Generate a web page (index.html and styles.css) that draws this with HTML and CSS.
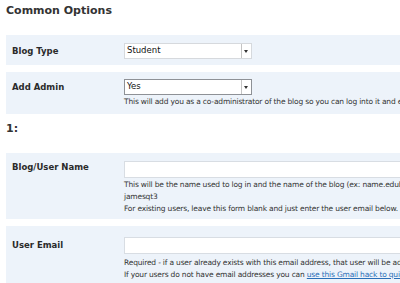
FILE: index.html
```html
<!DOCTYPE html>
<html lang="en">

<head>
    <meta charset="UTF-8">
    <meta name="viewport" content="width=device-width, initial-scale=1.0">
    <title>Common Options</title>
    <link rel="stylesheet" href="styles.css">
</head>

<body>
    <h2 class="section-title">Common Options</h2>

    <div class="row row-first">
        <div class="label">Blog Type</div>
        <div class="field">
            <div class="select">
                <span class="select-text">Student</span>
                <span class="select-arrow"></span>
            </div>
        </div>
    </div>

    <div class="row row-admin">
        <div class="label">Add Admin</div>
        <div class="field">
            <div class="select select-focus">
                <span class="select-text">Yes</span>
                <span class="select-arrow"></span>
            </div>
            <p class="help">This will add you as a co-administrator of the blog so you can log into it and edit it later.</p>
        </div>
    </div>

    <h2 class="section-title number">1:</h2>

    <div class="row row-user">
        <div class="label">Blog/User Name</div>
        <div class="field">
            <input type="text" class="text-input">
            <p class="help">This will be the name used to log in and the name of the blog (ex: name.edublogs.org)</p>
            <p class="help">jamesqt3</p>
            <p class="help">For existing users, leave this form blank and just enter the user email below.</p>
        </div>
    </div>

    <div class="row row-email">
        <div class="label">User Email</div>
        <div class="field">
            <input type="text" class="text-input">
            <p class="help">Required - if a user already exists with this email address, that user will be added to the blog.</p>
            <p class="help">If your users do not have email addresses you can <a href="#">use this Gmail hack to quickly create them</a></p>
        </div>
    </div>
</body>

</html>
```

FILE: styles.css
```css
body {
    margin: 0;
    padding: 0 0 0 6px;
    font-family: "DejaVu Sans", Verdana, sans-serif;
    color: #333;
    background: #fff;
    overflow: hidden;
}

.section-title {
    margin: 0;
    padding-top: 4px;
    height: 31px;
    font-size: 11px;
    font-weight: bold;
    color: #333;
}

.number {
    padding-top: 1px;
    height: 31px;
}

.row {
    display: grid;
    grid-template-columns: 112px 1fr;
    padding: 7px 0 7px 6px;
    margin-bottom: 7px;
    background: #edf3fa;
    white-space: nowrap;
}

.row-first {
    padding: 8px 0 6px 6px;
}

.row-admin {
    padding-bottom: 6px;
}

.label {
    font-size: 8.5px;
    font-weight: bold;
    color: #2a2a2a;
    padding-top: 3px;
}

.row-user .label {
    padding-top: 1px;
}

.row-user {
    padding: 8px 0 4px 6px;
}

.row-email {
    padding-top: 11px;
}

.field {
    min-width: 0;
}

.select {
    display: flex;
    width: 126px;
    height: 14px;
    border: 1px solid #d6d9dd;
    background: #fff;
    font-size: 8.5px;
    color: #111;
}

.select-focus {
    border-color: #8e9196;
}

.select-text {
    flex: 1;
    padding: 1px 0 0 2px;
}

.select-arrow {
    width: 9px;
    border-left: 1px solid #c4c4c4;
    position: relative;
}

.select-arrow::after {
    content: "";
    position: absolute;
    left: 2px;
    top: 6px;
    border-left: 2px solid transparent;
    border-right: 2px solid transparent;
    border-top: 3px solid #333;
}

.help {
    margin: 0;
    font-size: 7.5px;
    line-height: 12px;
    letter-spacing: -0.18px;
    color: #333;
}

.select + .help {
    margin-top: 1px;
}

.text-input {
    display: block;
    box-sizing: border-box;
    width: 300px;
    height: 17px;
    margin: 0 0 1px;
    border: 1px solid #d8dde3;
    background: #fff;
}

.row-email .text-input {
    margin-bottom: 3px;
}

.help a {
    color: #2a6fb8;
}
```
